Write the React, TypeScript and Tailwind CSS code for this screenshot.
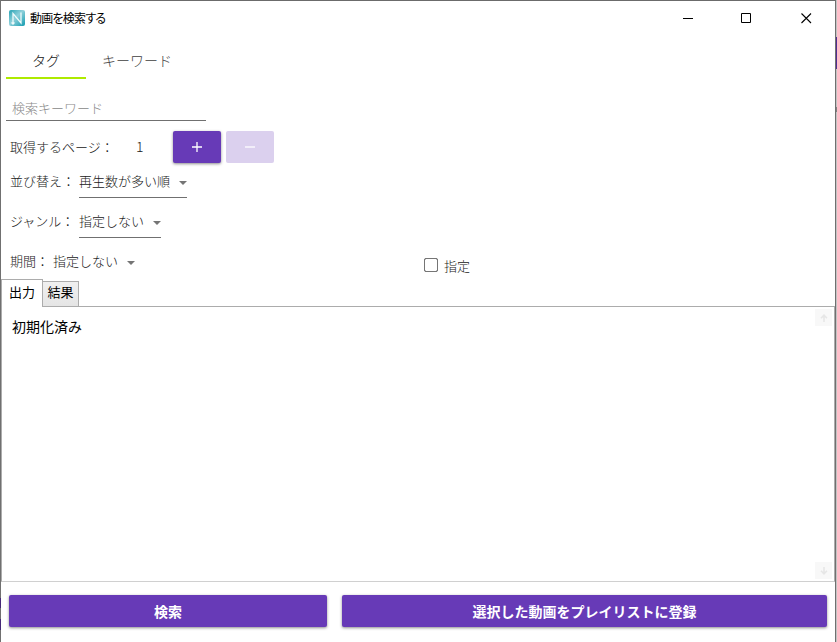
import type { ReactNode } from "react";

function Caret() {
  return (
    <svg width="8" height="4" viewBox="0 0 8 4" className="mt-[4px] shrink-0">
      <path d="M0 0h8L4 4z" fill="#757575" />
    </svg>
  );
}

function Select({ value, width, underlined = true }: { value: string; width: number; underlined?: boolean }) {
  return (
    <div
      className={`flex h-[31px] items-center justify-between border-b pb-[3px] ${underlined ? "border-[#707070]" : "border-transparent"}`}
      style={{ width }}
    >
      <span className="pb-px">{value}</span>
      <Caret />
    </div>
  );
}

function Button({ children, className = "" }: { children: ReactNode; className?: string }) {
  return (
    <button
      className={`flex h-8 shrink-0 items-center justify-center rounded-[2px] bg-[#673ab7] text-[14px] font-bold text-white ${className}`}
    >
      {children}
    </button>
  );
}

function ScrollArrow({ down = false }: { down?: boolean }) {
  return (
    <div className="flex h-[17px] w-[17px] items-center justify-center bg-[#f8f8f8]">
      <svg width="8" height="8" viewBox="0 0 8 8" className={down ? "rotate-180" : ""}>
        <path d="M4 8V1.5M1 4.2L4 1.2l3 3" fill="none" stroke="#e6e6e6" strokeWidth="1.6" />
      </svg>
    </div>
  );
}

function TitleBar() {
  return (
    <header className="flex h-[35px] shrink-0 items-center justify-between pl-2 pr-[23px] text-black">
      <div className="flex items-center gap-[5px] pb-px">
        <svg width="16" height="16" viewBox="0 0 16 16">
          <defs>
            <linearGradient id="logo" x1="0" y1="0" x2="1" y2="1">
              <stop offset="0" stopColor="#25a3b5" />
              <stop offset=".45" stopColor="#8fd0da" />
              <stop offset="1" stopColor="#129bb0" />
            </linearGradient>
          </defs>
          <rect width="16" height="16" rx="2" fill="url(#logo)" />
          <path d="M4 14V3.5L12 13V2.5M2.5 12.5L4 14l1.5-1.5" fill="none" stroke="#effafb" strokeWidth="1.3" />
        </svg>
        <span className="whitespace-nowrap text-[12px] font-normal tracking-[-0.75px] [font-feature-settings:'palt']">動画を検索する</span>
      </div>
      <div className="flex items-center">
        <svg width="11" height="11" viewBox="0 0 11 11">
          <path d="M0 5.5h10" stroke="#000" />
        </svg>
        <svg width="11" height="11" viewBox="0 0 11 11" className="ml-[47px]">
          <path d="M.5 .5h9v9h-9z" fill="none" stroke="#000" />
        </svg>
        <svg width="11" height="11" viewBox="0 0 11 11" className="ml-[49px]">
          <path d="M.5 .5L10 10M10 .5L.5 10" stroke="#000" strokeWidth="1.1" />
        </svg>
      </div>
    </header>
  );
}

export default function App() {
  return (
    <div className="flex h-[642px] w-[837px] overflow-hidden bg-white font-['Noto_Sans_CJK_JP',sans-serif] text-[13px] font-light leading-none text-[#202020]">
      <div className="flex w-px shrink-0 flex-col bg-[#707070]">
        <div className="mt-[598px] h-[10px] bg-[#442878]" />
        <div className="mt-[11px] h-[11px] bg-[#442878]" />
      </div>
      <main className="flex w-[834px] shrink-0 flex-col border-t border-[#6b6b6b] bg-white">
        <TitleBar />

        <nav className="ml-[5px] flex h-[43px] text-[14px]">
          <div className="flex w-20 items-center justify-center border-b-2 border-[#aeea00] pt-[7px]">タグ</div>
          <div className="flex w-[102px] items-center justify-center pt-[5px] text-[#404040]">キーワード</div>
        </nav>

        <div className="ml-[5px] mt-5 flex h-[22px] w-[200px] items-center border-b border-[#707070] pb-[4px] pl-[6px] text-[#888888]">
          検索キーワード
        </div>

        <div className="mt-[10px] flex h-8 items-center pl-[9px]">
          <span className="w-[126px] pb-[2px]">取得するページ：</span>
          <span className="w-[37px] pb-[2px] text-[14px]">1</span>
          <Button className="w-12 shadow-[0_1px_3px_rgba(0,0,0,0.45)]">
            <svg width="10" height="10" viewBox="0 0 10 10">
              <path d="M0 5h10M5 0v10" stroke="#fff" strokeWidth="1.3" />
            </svg>
          </Button>
          <Button className="ml-[5px] w-12 opacity-[0.23]">
            <svg width="10" height="10" viewBox="0 0 10 10">
              <path d="M0 5h10" stroke="#fff" strokeWidth="1.3" />
            </svg>
          </Button>
        </div>

        <div className="mt-1 flex h-[31px] items-center pl-[9px]">
          <span className="w-[69px] pb-[5px]">並び替え：</span>
          <Select value="再生数が多い順" width={108} />
        </div>
        <div className="mt-[9px] flex h-[31px] items-center pl-[9px]">
          <span className="w-[69px] whitespace-nowrap pb-[5px]">ジャンル：</span>
          <Select value="指定しない" width={82} />
        </div>
        <div className="mt-[9px] flex h-[31px] items-center pl-[9px]">
          <span className="w-[43px] pb-[5px]">期間：</span>
          <Select value="指定しない" width={82} underlined={false} />
          <label className="ml-[289px] mt-[5px] flex items-center gap-[6px]">
            <span className="h-[14px] w-[14px] rounded-[2px] border-[1.5px] border-[#757575] outline outline-[0.5px] -outline-offset-[1.5px] outline-[#757575]" />
            <span>指定</span>
          </label>
        </div>

        <div className="flex h-[28px] shrink-0 items-end font-normal text-black">
          <div className="z-10 -mb-px flex h-[28px] w-[42px] items-center justify-center border border-b-0 border-[#acacac] bg-white pb-[4px]">出力</div>
          <div className="-mb-px flex h-[26px] w-[36px] items-center justify-center border border-l-0 border-[#acacac] bg-gradient-to-b from-[#f0f0f0] to-[#e5e5e5] pb-[5px]">
            結果
          </div>
        </div>
        <section className="flex h-[276px] shrink-0 justify-between border border-b-[#d0d0d0] border-[#acacac] pl-[10px] pr-[2px] text-[14px] font-normal text-black">
          <p className="pt-[12px]">初期化済み</p>
          <div className="flex flex-col justify-between pb-[2px] pt-[2px]">
            <ScrollArrow />
            <ScrollArrow down />
          </div>
        </section>

        <footer className="flex gap-[15px] pl-2 pt-[13px]">
          <Button className="w-[318px] shadow-[0_1px_3px_rgba(0,0,0,0.45)]">検索</Button>
          <Button className="w-[485px] shadow-[0_1px_3px_rgba(0,0,0,0.45)]">選択した動画をプレイリストに登録</Button>
        </footer>
      </main>
      <div className="w-px shrink-0 bg-[#707070]" />
      <div className="w-px shrink-0 bg-[#c4c4c4]">
        <div className="h-[37px]" />
        <div className="h-8 bg-[#512e90]" />
        <div className="mt-[38px] h-[5px] bg-[#808080]" />
      </div>
    </div>
  );
}
